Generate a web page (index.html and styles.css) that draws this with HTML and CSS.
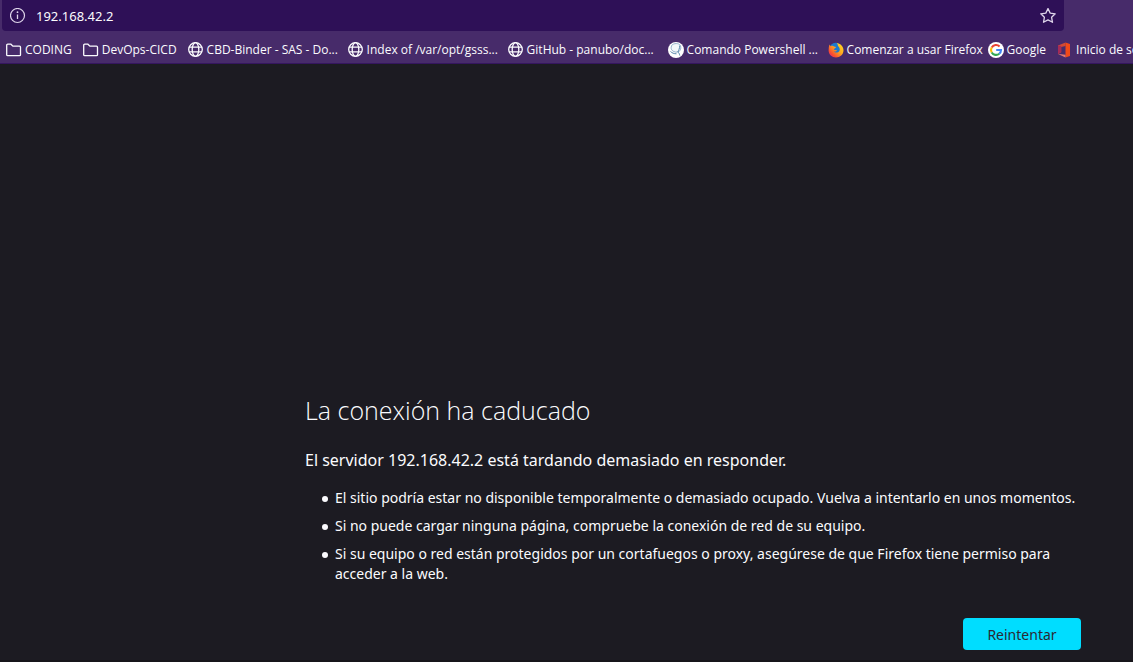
FILE: index.html
```html
<!DOCTYPE html>
<html lang="es">
<head>
<meta charset="utf-8">
<meta name="viewport" content="width=device-width, initial-scale=1">
<title>La conexión ha caducado</title>
<link rel="stylesheet" href="styles.css">
</head>
<body>
<svg class="defs" aria-hidden="true">
  <symbol id="folder" viewBox="0 0 16 16"><path d="M.7 12.700V3.200a1 1 0 0 1 1-1h3.200l2 2h6.600a1 1 0 0 1 1 1v7.500a1 1 0 0 1-1 1H1.700a1 1 0 0 1-1-1z" fill="none" stroke="currentColor" stroke-width="1.300"/></symbol>
  <symbol id="globe" viewBox="0 0 16 16"><g fill="none" stroke="currentColor" stroke-width="1.300"><circle cx="7.500" cy="7.500" r="6.800"/><ellipse cx="7.500" cy="7.500" rx="3.300" ry="6.800"/><path d="M1 5.200h13M1 9.800h13"/></g></symbol>
</svg>
<header class="toolbar">
  <div class="urlbar">
    <button class="icon-button" aria-label="Información del sitio">
      <svg class="icon" viewBox="0 0 16 16"><circle cx="7.500" cy="7.500" r="7" fill="none" stroke="currentColor" stroke-width="1.200"/><path d="M7.500 6.500V11" stroke="currentColor" stroke-width="1.300"/><circle cx="7.500" cy="4.200" r=".9" fill="currentColor"/></svg>
    </button>
    <input class="address" type="text" value="192.168.42.2" aria-label="Dirección">
    <button class="icon-button" aria-label="Añadir a marcadores">
      <svg class="icon" viewBox="0 0 16 16"><path d="M8 .5l2.200 4.600 5 .7-3.600 3.500.9 5L8 11.900l-4.500 2.400.9-5L.8 5.800l5-.7z" fill="none" stroke="currentColor" stroke-width="1.300" stroke-linejoin="round"/></svg>
    </button>
  </div>
  <nav class="bookmarks" aria-label="Marcadores">
    <a class="bookmark" href="#"><svg class="icon"><use href="#folder"/></svg><span class="label">CODING</span></a>
    <a class="bookmark" href="#"><svg class="icon"><use href="#folder"/></svg><span class="label">DevOps-CICD</span></a>
    <a class="bookmark long" href="#"><svg class="icon"><use href="#globe"/></svg><span class="label">CBD-Binder - SAS - Do...</span></a>
    <a class="bookmark long" href="#"><svg class="icon"><use href="#globe"/></svg><span class="label">Index of /var/opt/gsss...</span></a>
    <a class="bookmark long" href="#"><svg class="icon"><use href="#globe"/></svg><span class="label">GitHub - panubo/doc...</span></a>
    <a class="bookmark long" href="#"><svg class="icon" viewBox="0 0 16 16"><circle cx="8" cy="8" r="8" fill="#fff"/><path d="M3.500 4C4 1.500 9.500.8 11.500 2.500c2 2 1.600 5-.4 7-2.400 1.200-5 .6-6.600-.8-1.400-1.200-1.700-3-1-4.700z" fill="#f3f8fa" stroke="#7aa0bd" stroke-width=".8"/><path d="M11.800 3.500c-.3 3-1 5-2 6.500 1 .6 1.600 1.600 2 3.500M2.500 9.500c1.500 1.500 3.500 2.300 6 2.300" fill="none" stroke="#5485aa" stroke-width="1"/></svg><span class="label">Comando Powershell ...</span></a>
    <a class="bookmark long" href="#"><svg class="icon" viewBox="0 0 16 16">
      <defs><linearGradient id="flame" x1="1" y1="0" x2="0" y2="1"><stop offset="0" stop-color="#ffe226"/><stop offset=".4" stop-color="#ffb01f"/><stop offset=".75" stop-color="#f9502f"/><stop offset="1" stop-color="#e31587"/></linearGradient></defs>
      <circle cx="7.500" cy="6.500" r="5.800" fill="#1c79cf"/><path d="M1.500 2.500l1.200 1.800C4 3.500 5.200 3.800 6 4.500l2 .4c-.3 1.300-1.600 1.400-2.200 2.400.6 1.200 2.200.8 3.400.9-.8 1.300-2.500 1.500-3.700 1C7 11 10 11.200 11.400 9c1-2-.1-4-1.400-5 0-1.500-.8-2.600-1.500-3.300 3.600.8 7 3.300 7 7.600C15.500 12.500 12 15.500 8 15.500S.6 12.500.6 8.300c0-2 .3-4 .9-5.800z" fill="url(#flame)"/></svg><span class="label">Comenzar a usar Firefox</span></a>
    <a class="bookmark" href="#"><svg class="icon" viewBox="0 0 16 16"><circle cx="8" cy="8" r="8" fill="#fff"/><g fill="none" stroke-width="2.100"><path d="M11.600 4.500A5 5 0 0 0 3.700 5.600" stroke="#ea4335"/><path d="M3.700 5.500a5 5 0 0 0 0 5" stroke="#fbbc05"/><path d="M3.700 10.400a5 5 0 0 0 7.600 1.300" stroke="#34a853"/><path d="M11.200 11.800A5 5 0 0 0 13 8H8.200" stroke="#4285f4"/></g></svg><span class="label">Google</span></a>
    <a class="bookmark" href="#"><svg class="icon" viewBox="0 0 16 16"><path d="M8.500.5L1 3.500v8.500l3.200-1.700V5L8.500 4z" fill="#d14a35"/><path d="M8.500.5L13 2v12l-4.500 1.500z" fill="#f04a18"/><path d="M1 12l7.500 3.500v-2.700l-4.300-.5z" fill="#e07a72"/><path d="M1 3.500V12l3.200-1.700V4z" fill="#a52b58"/></svg><span class="label">Inicio de se</span></a>
  </nav>
</header>
<main class="page">
  <section class="error">
    <h1 class="title">La conexión ha caducado</h1>
    <p class="summary">El servidor 192.168.42.2 está tardando demasiado en responder.</p>
    <ul class="reasons">
      <li>El sitio podría estar no disponible temporalmente o demasiado ocupado. Vuelva a intentarlo en unos momentos.</li>
      <li>Si no puede cargar ninguna página, compruebe la conexión de red de su equipo.</li>
      <li>Si su equipo o red están protegidos por un cortafuegos o proxy, asegúrese de que Firefox tiene permiso para acceder a la web.</li>
    </ul>
    <div class="actions"><button class="retry">Reintentar</button></div>
  </section>
</main>
</body>
</html>
```
FILE: styles.css
```css
* { box-sizing: border-box; }
body {
  margin: 0;
  min-height: 100vh;
  display: flex;
  flex-direction: column;
  overflow-x: hidden;
  background: #1c1b22;
  color: #fbfbfe;
  font-family: "Noto Sans", "Open Sans", sans-serif;
}
button, input { font: inherit; color: inherit; }
.defs { position: absolute; width: 0; height: 0; }
.icon { width: 16px; height: 16px; flex: none; display: block; }
.toolbar {
  background: #472b6a;
  border-bottom: 1px solid #35165f;
}
.urlbar {
  display: flex;
  align-items: center;
  height: 31px;
  margin: 0 69px 0 2px;
  padding: 0 8px;
  gap: 10px;
  background: #2e1057;
  border-radius: 0 0 4px 4px;
}
.icon-button { padding: 0; border: 0; background: none; color: #ded5ea; }
.address {
  flex: 1;
  min-width: 0;
  padding: 0;
  border: 0;
  outline: 0;
  background: none;
  font-size: 13px;
}
.bookmarks {
  display: flex;
  align-items: center;
  height: 32px;
  padding: 5px 0 0 6px;
  gap: 11px;
  overflow: hidden;
  font-family: "Open Sans", "Noto Sans", sans-serif;
}
.bookmark {
  display: flex;
  flex: none;
  align-items: center;
  gap: 3px;
  color: inherit;
  font-size: 12px;
  line-height: 16px;
  text-decoration: none;
  white-space: nowrap;
}
.long { width: 149px; }
.page {
  flex: 1;
  display: flex;
  align-items: flex-end;
  padding: 0 48px 10px 305px;
  border-bottom: 2px solid #17151a;
}
.error { width: 100%; }
.title {
  margin: 0 0 20px;
  font-family: "Open Sans", "Noto Sans", sans-serif;
  font-size: 25px;
  font-weight: 300;
  line-height: 36px;
}
.summary { margin: 0 0 16px; font-size: 16px; line-height: 24px; }
.reasons {
  margin: 0;
  padding-left: 17px;
  list-style: none;
  font-size: 14px;
  line-height: 20px;
}
.reasons li { display: flex; gap: 7px; }
.reasons li::before {
  content: "";
  flex: none;
  width: 6px;
  height: 6px;
  margin-top: 8px;
  border-radius: 50%;
  background: currentColor;
}
.reasons li + li { margin-top: 8px; }
.actions { display: flex; justify-content: flex-end; margin-top: 34px; }
.retry {
  width: 118px;
  height: 32px;
  margin-right: 4px;
  border: 0;
  border-radius: 4px;
  background: #00ddff;
  color: #2b2a33;
  font-size: 14px;
}
```
